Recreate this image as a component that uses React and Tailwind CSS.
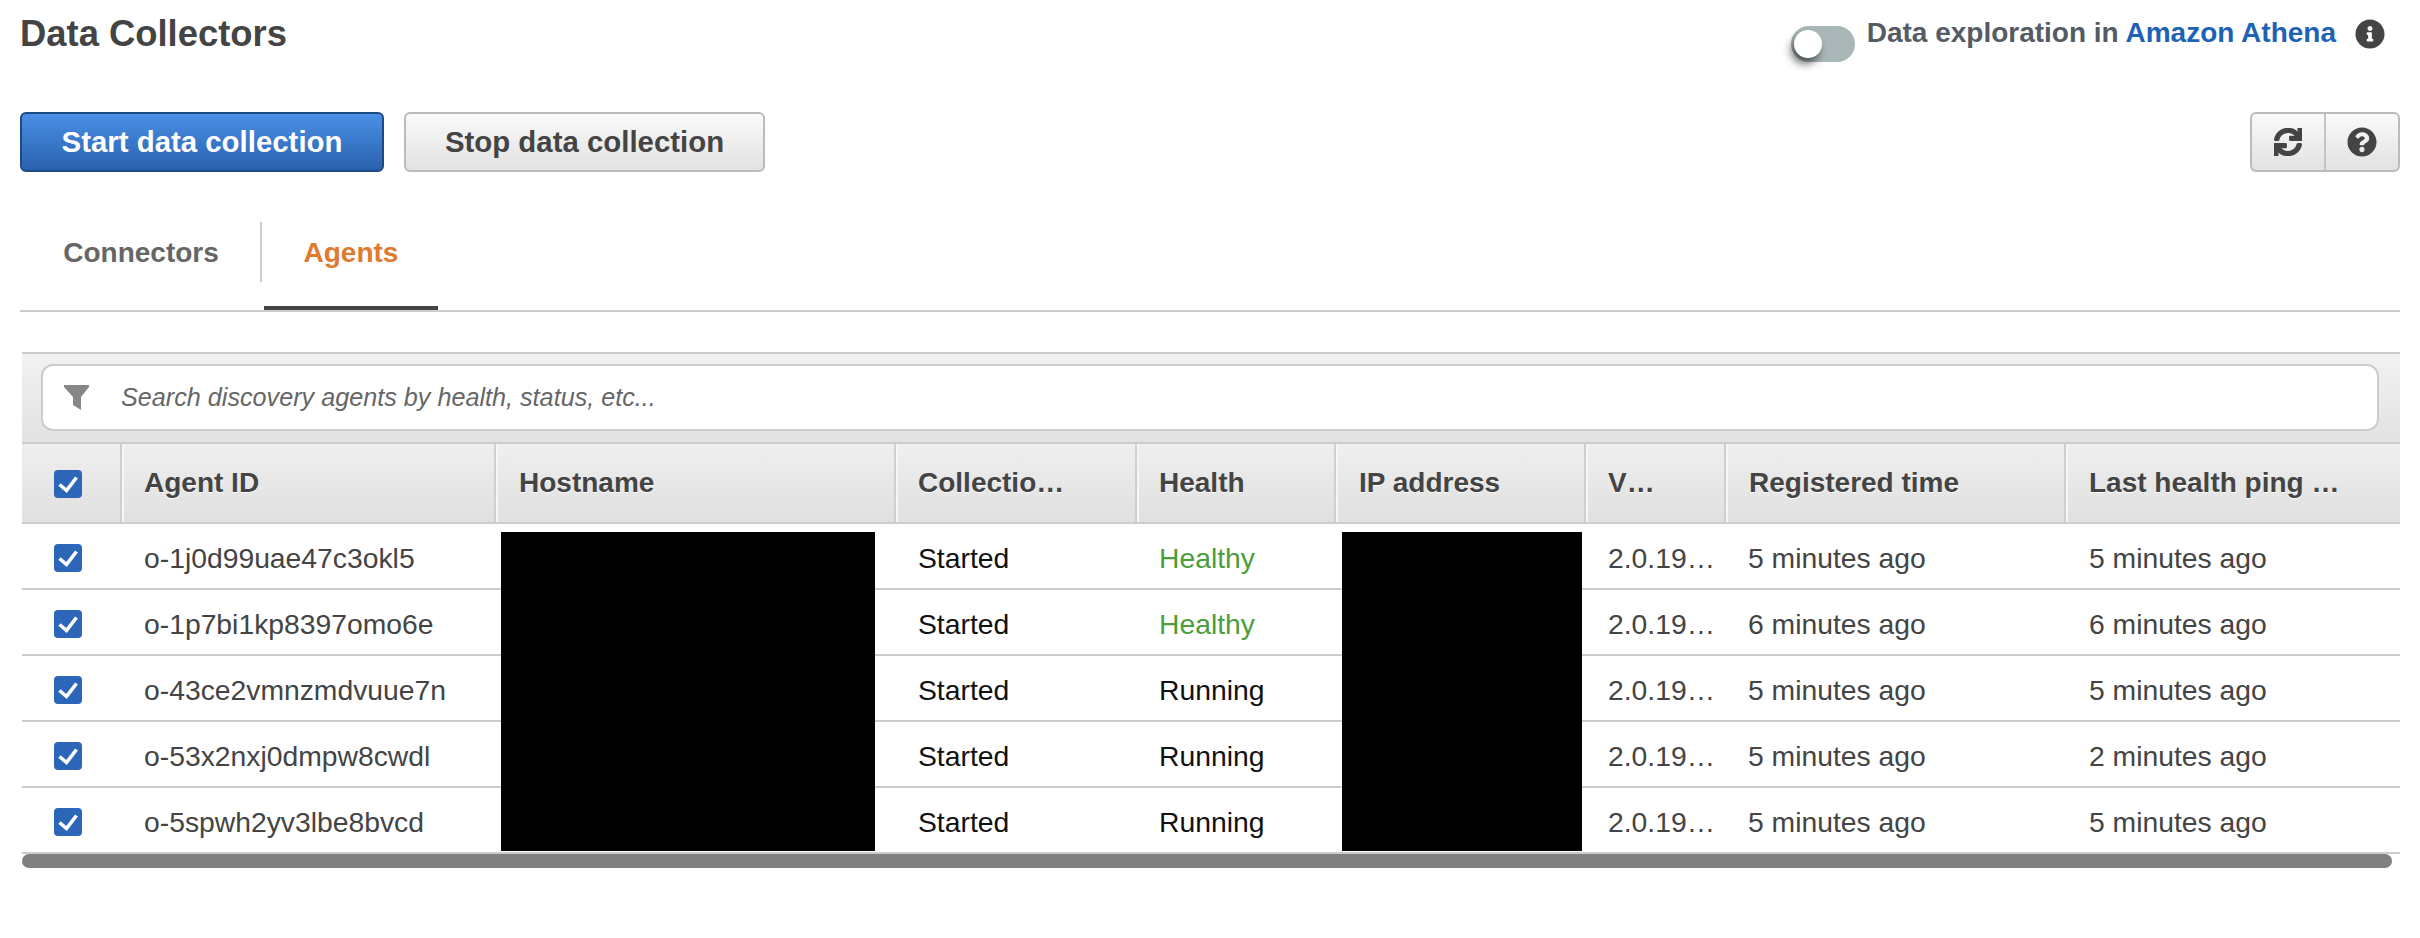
import React from "react";
import { FaInfoCircle, FaQuestionCircle, FaSync } from "react-icons/fa";

const rows = [
  ["o-1j0d99uae47c3okl5", "Healthy", "5 minutes ago", "5 minutes ago"],
  ["o-1p7bi1kp8397omo6e", "Healthy", "6 minutes ago", "6 minutes ago"],
  ["o-43ce2vmnzmdvuue7n", "Running", "5 minutes ago", "5 minutes ago"],
  ["o-53x2nxj0dmpw8cwdl", "Running", "5 minutes ago", "2 minutes ago"],
  ["o-5spwh2yv3lbe8bvcd", "Running", "5 minutes ago", "5 minutes ago"],
];

const cols = "grid grid-cols-[98px_374px_400px_241px_199px_250px_140px_340px_336px]";

function Check() {
  return (
    <span className="flex h-[28px] w-[28px] items-center justify-center rounded-[4px] bg-[#2b66b8]">
      <svg width="28" height="28" viewBox="0 0 28 28">
        <path d="M5.5 14.5L12.5 20.5L22.5 7.5" fill="none" stroke="#fff" strokeWidth="3.6" />
      </svg>
    </span>
  );
}

function Head({ children, pad = "pl-[23px]" }) {
  return (
    <div className={"flex h-full items-center border-l-2 border-l-[#cfcfcf] shadow-[inset_2px_0_0_#f6f6f6] " + pad}>
      <span className="overflow-hidden whitespace-nowrap [text-shadow:0_1px_0_#fff]">{children}</span>
    </div>
  );
}

export default function App() {
  return (
    <div className="h-[938px] w-[2420px] overflow-hidden bg-white font-['Liberation_Sans',Arial,sans-serif] text-[#444]">
      <div className="px-[20px]">
        <div className="flex h-[112px] items-start justify-between">
          <h1 className="mt-[12px] text-[36.4px] font-bold leading-[44px]">Data Collectors</h1>
          <div className="mt-[14px] flex items-start">
            <div className="relative mt-[12px] h-[36px] w-[64px] rounded-full bg-[#aab7b8]">
              <div className="absolute left-[3px] top-[4px] h-[28px] w-[28px] rounded-full bg-white shadow-[-3px_6px_8px_rgba(0,0,0,0.55)]" />
            </div>
            <span className="ml-[12px] pt-[1px] text-[28px] font-bold leading-[36px] text-[#545b64]">
              Data exploration in <span className="text-[#1f62b5]">Amazon Athena</span>
            </span>
            <FaInfoCircle className="ml-[19px] mr-[15px] mt-[5px] text-[30px] text-[#444]" />
          </div>
        </div>

        <div className="flex h-[60px] items-stretch justify-between">
          <div className="flex gap-[20px]">
            <button className="w-[364px] rounded-[6px] border-2 border-[#1b4a85] bg-gradient-to-b from-[#4a90e6] to-[#2a61ad] pt-[1px] text-[29.4px] font-bold text-white">
              Start data collection
            </button>
            <button className="w-[361px] rounded-[6px] border-2 border-[#bbb] bg-gradient-to-b from-[#fafafa] to-[#e2e2e2] pt-[1px] text-[29.4px] font-bold text-[#444]">
              Stop data collection
            </button>
          </div>
          <div className="flex w-[150px] rounded-[6px] border-2 border-[#bbb] bg-gradient-to-b from-[#fafafa] to-[#e2e2e2]">
            <div className="flex flex-1 items-center justify-center border-r-2 border-r-[#c4c4c4]">
              <FaSync className="text-[28px]" stroke="currentColor" strokeWidth={24} />
            </div>
            <div className="flex flex-1 items-center justify-center">
              <FaQuestionCircle className="text-[30px]" />
            </div>
          </div>
        </div>

        <div className="flex h-[140px] items-start border-b-2 border-b-[#ccc] text-[28px] font-bold">
          <div className="mt-[50px] flex h-[60px] w-[242px] items-center justify-center border-r-2 border-r-[#ccc] pl-[2px] pt-[2px] text-[#666]">
            Connectors
          </div>
          <div className="ml-[2px] mt-[50px] flex h-[88px] w-[174px] justify-center border-b-4 border-b-[#444] pt-[14px] text-[#e07a2f]">
            <span className="leading-[34px]">Agents</span>
          </div>
        </div>
      </div>

      <div className="relative ml-[22px] mt-[40px] w-[2378px] text-[28px]">
        <div className="border-y-2 border-y-[#ccc] bg-gradient-to-b from-[#f2f2f2] to-[#e2e2e2] pb-[11px] pl-[19px] pr-[21px] pt-[10px]">
          <div className="flex h-[67px] items-center rounded-[12px] border-2 border-[#ccc] bg-white pl-[21px]">
            <svg width="25" height="25" viewBox="0 0 25 25" className="text-[#878787]">
              <path d="M0 0H25V2L17 12V25L9 20V12L0 2Z" fill="currentColor" />
            </svg>
            <span className="ml-[32px] text-[25.2px] italic text-[#666]">Search discovery agents by health, status, etc...</span>
          </div>
        </div>

        <div className={cols + " h-[80px] border-b-2 border-b-[#ccc] bg-gradient-to-b from-[#efefef] to-[#e0e0e0] font-bold"}>
          <div className="flex items-center pl-[32px] pt-[2px]"><Check /></div>
          <Head pad="pl-[22px]">Agent ID</Head>
          <Head>Hostname</Head>
          <Head pad="pl-[22px]">Collectio…</Head>
          <Head pad="pl-[22px]">Health</Head>
          <Head>IP address</Head>
          <Head pad="pl-[22px]">V…</Head>
          <Head>Registered time</Head>
          <Head>Last health ping …</Head>
        </div>

        {rows.map((r) => (
          <div key={r[0]} className={cols + " h-[66px] items-center border-b-2 border-b-[#ccc] pt-[4px] text-[28.3px]"}>
            <div className="pl-[32px]"><Check /></div>
            <div className="pl-[24px]">{r[0]}</div>
            <div />
            <div className="pl-[24px] text-[#111]">Started</div>
            <div className={"pl-[24px] " + (r[1] === "Healthy" ? "text-[#4a9e3c]" : "text-[#111]")}>{r[1]}</div>
            <div />
            <div className="pl-[24px]">2.0.19…</div>
            <div className="pl-[24px]">{r[2]}</div>
            <div className="pl-[25px]">{r[3]}</div>
          </div>
        ))}

        <div className="absolute left-[479px] top-[180px] h-[319px] w-[374px] bg-black" />
        <div className="absolute left-[1320px] top-[180px] h-[319px] w-[240px] bg-black" />

        <div className="h-[14px] w-[2370px] rounded-full bg-[#808080]" />
      </div>
    </div>
  );
}
